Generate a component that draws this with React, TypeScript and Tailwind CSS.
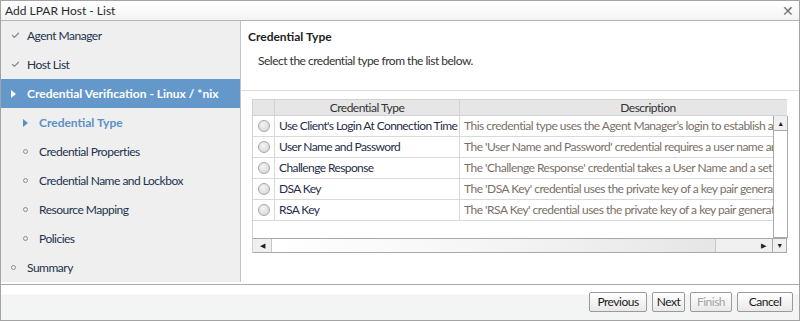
import { Check } from 'lucide-react';

type Step = { label: string; kind: 'done' | 'current' | 'active' | 'todo'; level: 0 | 1 };

const steps: Step[] = [
  { label: 'Agent Manager', kind: 'done', level: 0 },
  { label: 'Host List', kind: 'done', level: 0 },
  { label: 'Credential Verification - Linux / *nix', kind: 'current', level: 0 },
  { label: 'Credential Type', kind: 'active', level: 1 },
  { label: 'Credential Properties', kind: 'todo', level: 1 },
  { label: 'Credential Name and Lockbox', kind: 'todo', level: 1 },
  { label: 'Resource Mapping', kind: 'todo', level: 1 },
  { label: 'Policies', kind: 'todo', level: 1 },
  { label: 'Summary', kind: 'todo', level: 0 },
];

const rows = [
  {
    name: "Use Client's Login At Connection Time",
    desc: "This credential type uses the Agent Manager\u2019s login to establish a connection to the monitored host.",
  },
  {
    name: 'User Name and Password',
    desc: "The 'User Name and Password' credential requires a user name and a password for the host.",
  },
  {
    name: 'Challenge Response',
    desc: "The 'Challenge Response' credential takes a User Name and a set of prompts and responses.",
  },
  {
    name: 'DSA Key',
    desc: "The 'DSA Key' credential uses the private key of a key pair generated with the DSA algorithm.",
  },
  {
    name: 'RSA Key',
    desc: "The 'RSA Key' credential uses the private key of a key pair generated with the RSA algorithm.",
  },
];

function StepIcon({ kind }: { kind: Step['kind'] }) {
  if (kind === 'done') return <Check className="h-[9px] w-[9px] text-[#8c8c8c]" strokeWidth={3.5} />;
  if (kind === 'current')
    return <span className="h-0 w-0 border-y-[4px] border-l-[5px] border-y-transparent border-l-white" />;
  if (kind === 'active')
    return <span className="h-0 w-0 border-y-[4px] border-l-[5px] border-y-transparent border-l-[#5b8fc9]" />;
  return <span className="h-[5px] w-[5px] rounded-full border border-[#8f8f8f]" />;
}

function Radio() {
  return (
    <span className="h-[12px] w-[12px] rounded-full border border-[#a6a6a6] bg-[radial-gradient(circle_at_40%_35%,#f4f4f4,#d2d2d2)]" />
  );
}

function Btn({ label, w, disabled }: { label: string; w: string; disabled?: boolean }) {
  return (
    <button
      className={`${w} h-[20px] rounded-[2px] border border-[#9a9a9a] bg-[linear-gradient(#ffffff,#e9e9e9)] text-[12px] leading-none ${
        disabled ? 'text-[#a3a3a3]' : 'text-[#1b1b1b]'
      }`}
    >
      {label}
    </button>
  );
}

export default function App() {
  return (
    <div className="flex h-[321px] w-[800px] flex-col border border-[#a3a3a3] bg-white font-['Lato',sans-serif] text-[12px] tracking-[-0.5px] text-[#333]">
      {/* title bar */}
      <div className="flex h-[20px] shrink-0 items-center justify-between border-b border-[#b4b4b4] bg-[linear-gradient(#ffffff,#f2f4f4)] pl-[4px] pr-[5px] tracking-normal">
        <span className="text-[#2b2b2b]">Add LPAR Host - List</span>
        <span className="text-[14px] leading-none text-[#707070]">✕</span>
      </div>

      {/* body */}
      <div className="flex h-[263px] shrink-0 pb-[2px]">
        <div className="w-[240px] shrink-0 border-r border-[#c4c4c4] bg-[#efefef]">
          {steps.map((s) => (
            <div
              key={s.label}
              className={`flex h-[29px] items-center whitespace-nowrap ${s.level === 1 ? 'pl-[22px]' : 'pl-[10px]'} ${
                s.kind === 'current' ? 'bg-[#6498cb] font-bold tracking-normal text-white' : ''
              } ${s.kind === 'active' ? 'font-bold tracking-normal text-[#5b8fc9]' : ''} ${
                s.kind === 'done' || s.kind === 'todo' ? 'text-[#23334d]' : ''
              }`}
            >
              <span className="flex w-[16px] items-center justify-start">
                <StepIcon kind={s.kind} />
              </span>
              <span>{s.label}</span>
            </div>
          ))}
        </div>

        <div className="flex min-w-0 flex-1 flex-col">
          <div className="h-[70px] shrink-0 border-b border-[#dcdcdc] pl-[7px] pt-[8px]">
            <div className="font-bold leading-[16px] tracking-normal text-[#222]">Credential Type</div>
            <div className="mt-[8px] pl-[10px] leading-[16px] text-[#333]">
              Select the credential type from the list below.
            </div>
          </div>

          {/* grid */}
          <div className="ml-[11px] mt-[8px] w-[535px] border-l border-t border-[#d2d2d2]">
            <div className="flex h-[16px] border-b border-[#d2d2d2] bg-[#e6e6e6] leading-[15px] text-[#333]">
              <div className="w-[22px] shrink-0 border-r border-[#d2d2d2]" />
              <div className="w-[185px] shrink-0 border-r border-[#d2d2d2] text-center">Credential Type</div>
              <div className="min-w-0 flex-1 overflow-hidden">
                <div className="w-[376px] text-center">Description</div>
              </div>
            </div>
            <div className="flex h-[122px]">
              <div className="w-[520px] shrink-0 overflow-hidden">
                {rows.map((r) => (
                  <div key={r.name} className="flex h-[21px] border-b border-[#d9d9d9]">
                    <div className="flex w-[22px] shrink-0 items-center justify-center border-r border-[#d9d9d9]">
                      <Radio />
                    </div>
                    <div className="flex w-[185px] shrink-0 items-center overflow-hidden whitespace-nowrap border-r border-[#d9d9d9] pl-[4px] tracking-[-0.6px] text-[#1f2e49]">
                      {r.name}
                    </div>
                    <div className="flex min-w-0 flex-1 items-center overflow-hidden whitespace-nowrap pl-[4px] text-[#7a7068]">
                      {r.desc}
                    </div>
                  </div>
                ))}
              </div>
              <div className="flex w-[15px] shrink-0 flex-col border-l border-r border-[#a9a9a9] bg-[#f0f0f0]">
                <div className="flex h-[14px] shrink-0 items-center justify-center text-[7px] leading-none text-[#222]">▲</div>
                <div className="flex-1 border-y border-[#a9a9a9] bg-white" />
              </div>
            </div>
            <div className="flex h-[15px] border-y border-[#a9a9a9] bg-[#f0f0f0]">
              <div className="flex w-[18px] shrink-0 items-center justify-center text-[7px] leading-none text-[#222]">◀</div>
              <div className="w-[445px] shrink-0 border-x border-[#c8c8c8] bg-[linear-gradient(90deg,#ffffff,#f6f6f6_45%,#e6e6e6)]" />
              <div className="flex-1" />
              <div className="flex w-[18px] shrink-0 items-center justify-center text-[7px] leading-none text-[#222]">▶</div>
              <div className="flex w-[15px] shrink-0 items-center justify-center border-x border-[#a9a9a9] text-[7px] leading-none text-[#222]">▼</div>
            </div>
          </div>
        </div>
      </div>

      {/* footer */}
      <div className="flex flex-1 items-start justify-end gap-[5px] border-t border-[#aaaaaa] bg-[linear-gradient(#ffffff_0,#ffffff_9px,#f3f4f4_10px)] pr-[6px] pt-[7px]">
        <Btn label="Previous" w="w-[58px]" />
        <Btn label="Next" w="w-[33px]" />
        <Btn label="Finish" w="w-[42px]" disabled />
        <Btn label="Cancel" w="w-[56px]" />
      </div>
    </div>
  );
}
